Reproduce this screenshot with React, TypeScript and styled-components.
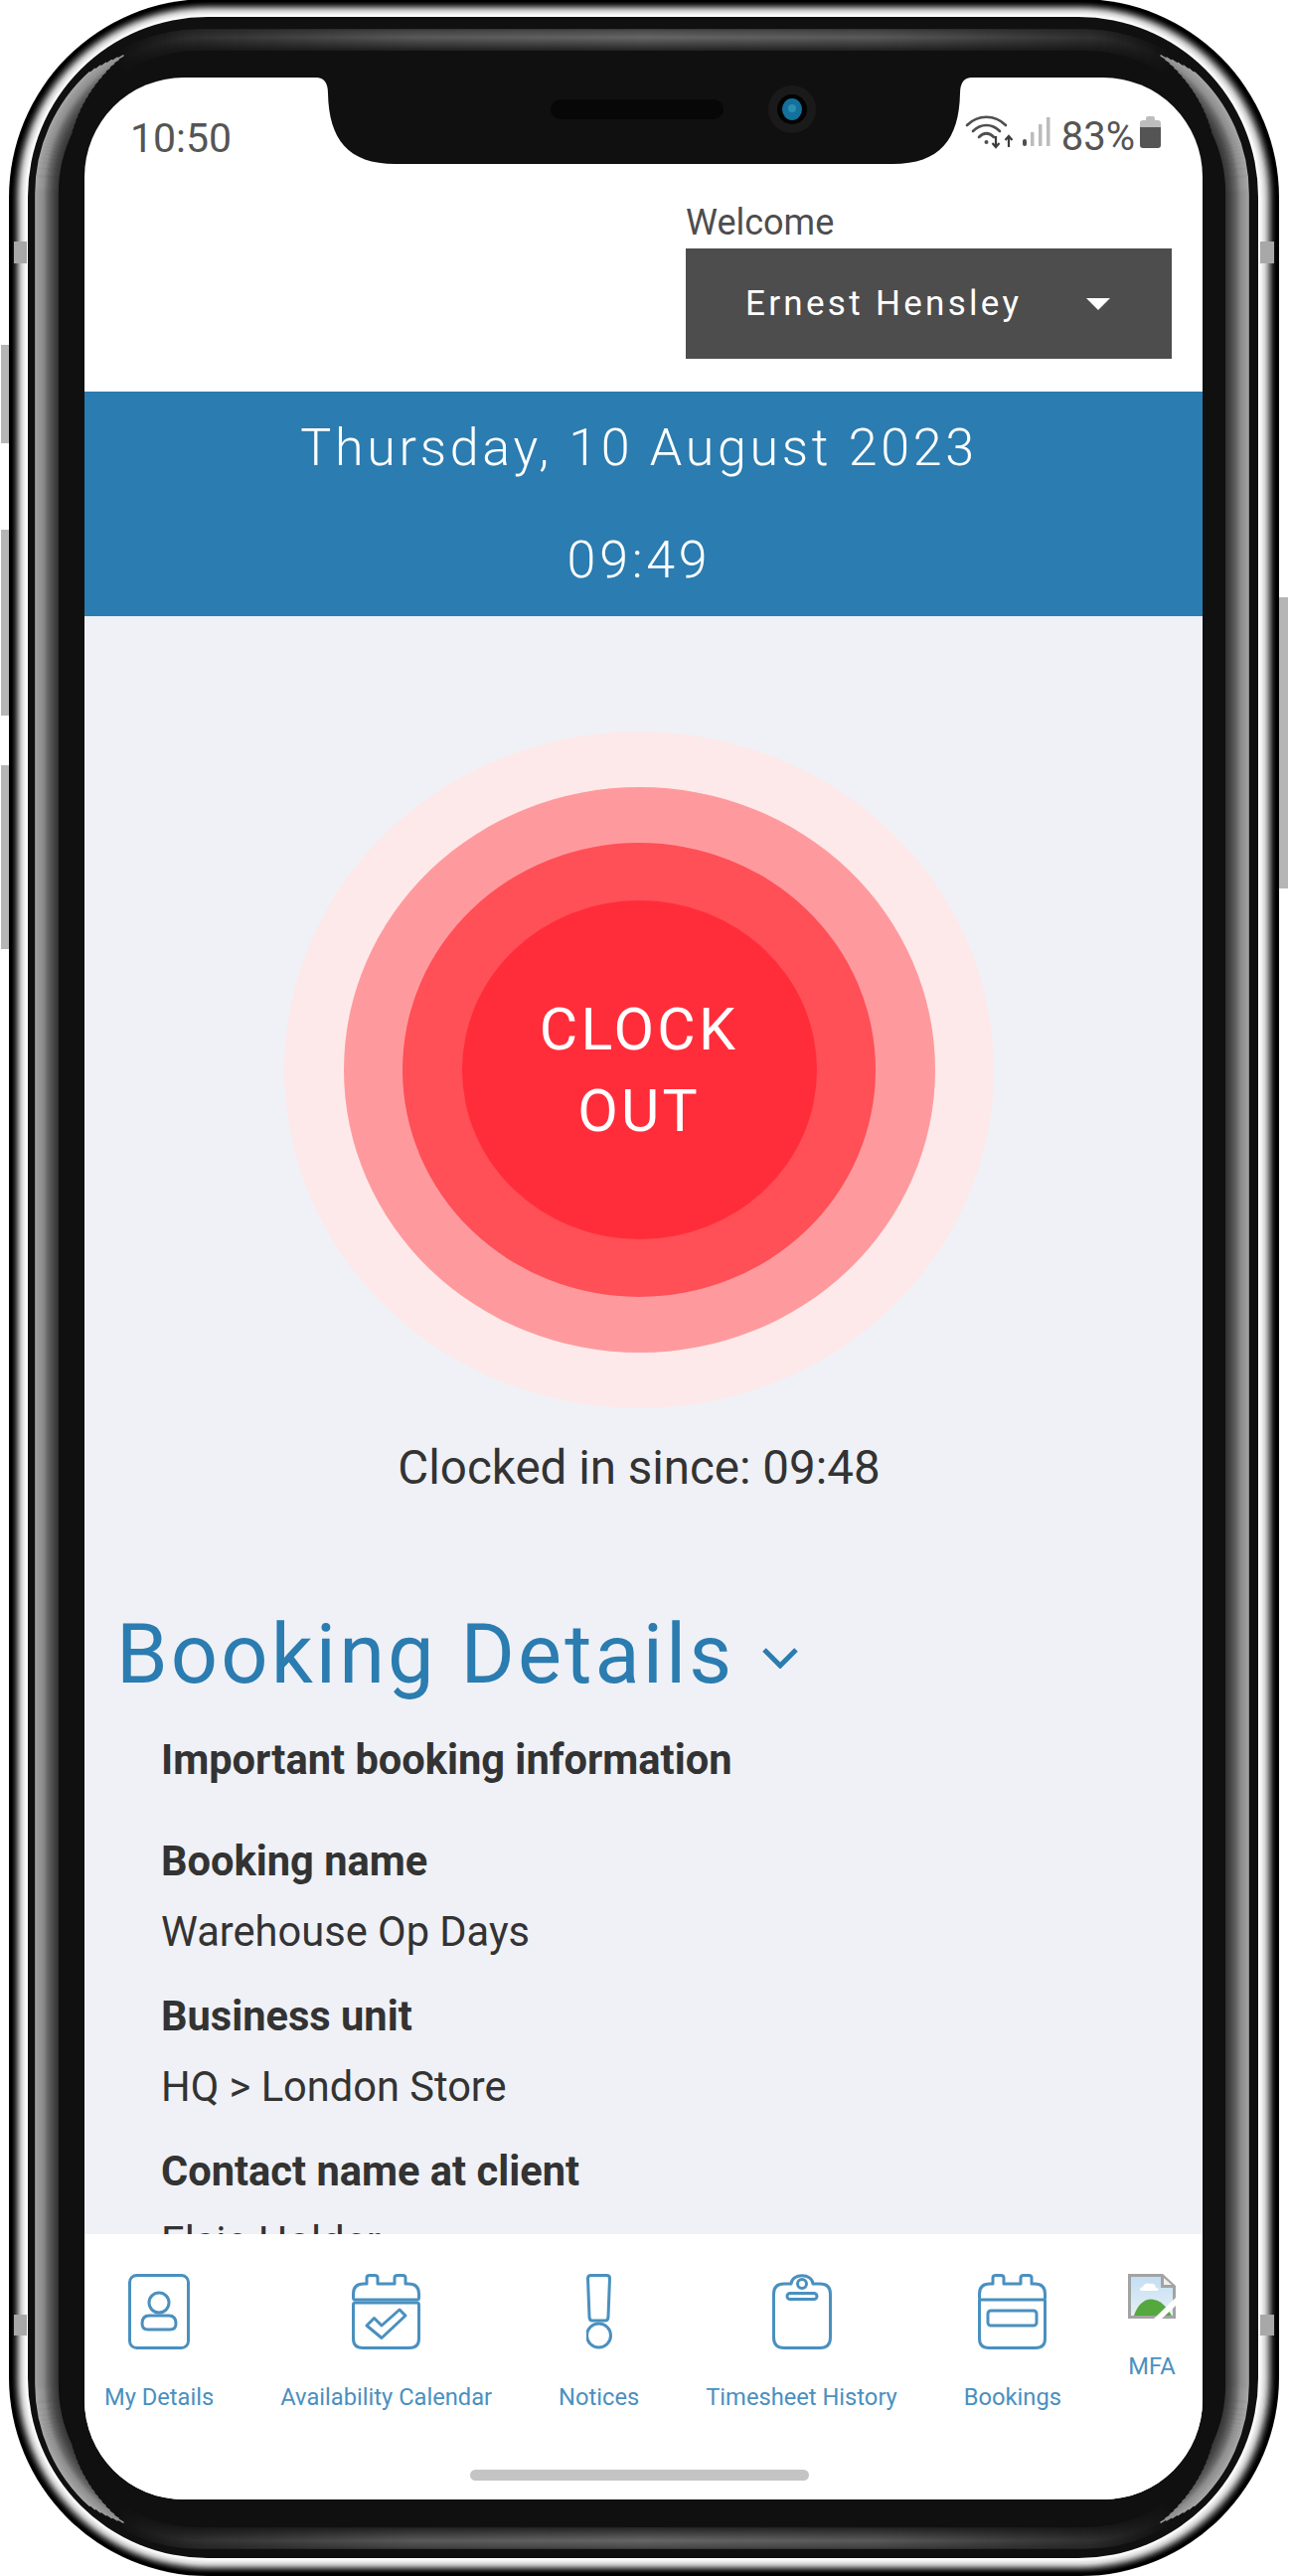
import React from "react";
import styled, { createGlobalStyle } from "styled-components";

const GlobalStyle = createGlobalStyle`
  html, body { margin: 0; padding: 0; background: #fff; }
  body { font-family: Roboto, "Liberation Sans", sans-serif; }
  * { box-sizing: border-box; }
`;

const BLUE = "#2b7cb0";
const NAV_BLUE = "#4a90bf";

const Phone = styled.div`
  position: relative;
  width: 1298px;
  height: 2592px;
  padding: 78px 88px 77px 85px;
  overflow: hidden;
`;

const FrameArt = styled.svg<{ $front?: boolean }>`
  position: absolute;
  left: 0;
  top: 0;
  z-index: ${(p) => (p.$front ? 2 : 0)};
`;

const Screen = styled.div`
  position: relative;
  z-index: 1;
  height: 100%;
  display: flex;
  flex-direction: column;
  background: #fff;
  border-radius: 100px;
  overflow: hidden;
`;

const StatusBar = styled.div`
  display: flex;
  justify-content: space-between;
  align-items: flex-start;
  padding: 38px 41px 0 46px;
  color: #555;
  font-size: 40px;
  line-height: 46px;
`;

const ClockTime = styled.span`
  font-size: 41px;
`;

const StatusRight = styled.div`
  display: flex;
  align-items: flex-start;
  margin-top: -1px;
`;

const WelcomeBlock = styled.div`
  align-self: flex-end;
  width: 489px;
  margin: 41px 31px 33px 0;
`;

const WelcomeLabel = styled.div`
  color: #4d4d4d;
  font-size: 36px;
  line-height: 42px;
  margin-bottom: 5px;
`;

const UserSelect = styled.div`
  display: flex;
  align-items: center;
  height: 111px;
  padding-left: 60px;
  background: #4d4d4d;
  color: #fff;
  font-size: 35px;
  letter-spacing: 3.3px;
`;

const Caret = styled.span`
  width: 0;
  height: 0;
  margin-left: 65px;
  border-left: 12px solid transparent;
  border-right: 12px solid transparent;
  border-top: 12px solid #fff;
`;

const DateBand = styled.div`
  background: ${BLUE};
  color: #fff;
  text-align: center;
  padding-right: 9px;
  font-weight: 300;
  font-size: 52px;
  line-height: 113px;
  letter-spacing: 3.7px;
`;

const Main = styled.main`
  flex: 1;
  min-height: 0;
  overflow: hidden;
  background: #eff1f6;
  padding: 116px 9px 0 0;
`;

const Ring = styled.div<{ $w: number; $h: number; $bg: string }>`
  width: ${(p) => p.$w}px;
  height: ${(p) => p.$h}px;
  margin: 0 auto;
  display: flex;
  align-items: center;
  justify-content: center;
  border-radius: 50%;
  background: ${(p) => p.$bg};
`;

const ClockLabel = styled.div`
  color: #fff;
  text-align: center;
  font-size: 59px;
  line-height: 82px;
  letter-spacing: 3.2px;
`;

const ClockedSince = styled.div`
  margin-top: 32px;
  color: #333;
  text-align: center;
  font-size: 47.5px;
  line-height: 56px;
`;

const SectionTitle = styled.h2`
  display: flex;
  align-items: center;
  gap: 28px;
  margin: 110px 0 0 32px;
  color: ${BLUE};
  font-weight: 400;
  font-size: 83px;
  line-height: 100px;
  letter-spacing: 3.1px;
`;

const Details = styled.div`
  padding: 33px 0 0 77px;
  color: #333;
  font-size: 41.6px;
  line-height: 46px;
`;

const Intro = styled.div`
  font-weight: 700;
  margin-bottom: 56px;
`;

const Field = styled.div`
  margin-bottom: 39px;
`;

const FieldLabel = styled.div`
  font-weight: 700;
  margin-bottom: 25px;
`;

const Nav = styled.nav`
  height: 267px;
  flex: none;
  background: #fff;
  display: flex;
  flex-direction: column;
  align-items: center;
  padding-right: 9px;
`;

const Tabs = styled.div`
  align-self: stretch;
  display: flex;
  align-items: flex-start;
  gap: 67px;
  padding: 40px 0 0 20px;
  height: 178px;
  white-space: nowrap;
`;

const Tab = styled.div`
  display: flex;
  flex-direction: column;
  align-items: center;
  gap: 35px;
  color: ${NAV_BLUE};
  font-size: 23.7px;
  line-height: 26px;
`;

const HomeBar = styled.div`
  width: 341px;
  height: 11px;
  margin-top: 59px;
  border-radius: 6px;
  background: #c4c4c4;
`;

const Line = styled.svg.attrs({ fill: "none", stroke: NAV_BLUE, strokeWidth: 3 })`
  display: block;
  stroke-linejoin: round;
`;

const lerp = (a: number, b: number, t: number) => a + (b - a) * t;

const silver = ["#000", "#000", "#000", "#0c0c0c", "#1a1a1a", "#2c2c2c", "#444", "#5e5e5e", "#7a7a7a", "#969696", "#b0b0b0", "#c6c6c6", "#d6d6d6", "#e2e2e2", "#ececec", "#f4f4f4", "#fbfbfb", "#fff"];

// grey of the inner bezel band, outermost radius first
const sideGrey = (i: number) => {
  const stops: [number, number][] = [[0, 168], [8, 144], [13, 102], [18, 74], [22, 58]];
  for (let s = 0; s < stops.length - 1; s++) {
    const [a, ca] = stops[s];
    const [b, cb] = stops[s + 1];
    if (i <= b) {
      const v = Math.round(lerp(ca, cb, (i - a) / (b - a)));
      return `rgb(${v},${v},${v})`;
    }
  }
  return "rgb(58,58,58)";
};

const flatGrey = (i: number) => {
  const v = Math.round(i < 8 ? lerp(74, 108, i / 8) : lerp(108, 44, (i - 8) / 12));
  return `rgb(${v},${v},${v})`;
};

const rad = (d: number) => (d * Math.PI) / 180;
const CX1 = 201;
const CX2 = 1091;
const CY1 = 195;
const CY2 = 2399;

const leftBand = (r: number, t: number) =>
  `M${CX1 - r * Math.sin(t)} ${CY1 - r * Math.cos(t)} A${r} ${r} 0 0 0 ${CX1 - r} ${CY1} L${CX1 - r} ${CY2} A${r} ${r} 0 0 0 ${CX1 - r * Math.sin(t)} ${CY2 + r * Math.cos(t)}`;
const rightBand = (r: number, t: number) =>
  `M${CX2 + r * Math.sin(t)} ${CY1 - r * Math.cos(t)} A${r} ${r} 0 0 1 ${CX2 + r} ${CY1} L${CX2 + r} ${CY2} A${r} ${r} 0 0 1 ${CX2 + r * Math.sin(t)} ${CY2 + r * Math.cos(t)}`;
const topBand = (r: number, t: number) =>
  `M${CX1 - r * Math.sin(t)} ${CY1 - r * Math.cos(t)} A${r} ${r} 0 0 1 ${CX1} ${CY1 - r} L${CX2} ${CY1 - r} A${r} ${r} 0 0 1 ${CX2 + r * Math.sin(t)} ${CY1 - r * Math.cos(t)}`;
const bottomBand = (r: number, t: number) =>
  `M${CX1 - r * Math.sin(t)} ${CY2 + r * Math.cos(t)} A${r} ${r} 0 0 0 ${CX1} ${CY2 + r} L${CX2} ${CY2 + r} A${r} ${r} 0 0 0 ${CX2 + r * Math.sin(t)} ${CY2 + r * Math.cos(t)}`;

const range = (n: number) => Array.from({ length: n }, (_, i) => i);

const PhoneBody = () => (
  <FrameArt width={1298} height={2592} viewBox="0 0 1298 2592">
    <defs>
      <linearGradient id="bandFade" x1="0" x2="1298" y1="0" y2="0" gradientUnits="userSpaceOnUse">
        <stop offset="0.09" stopColor="#fff" stopOpacity="0" />
        <stop offset="0.16" stopColor="#fff" stopOpacity="0.4" />
        <stop offset="0.32" stopColor="#fff" stopOpacity="0.85" />
        <stop offset="0.5" stopColor="#fff" stopOpacity="1" />
        <stop offset="0.68" stopColor="#fff" stopOpacity="0.85" />
        <stop offset="0.84" stopColor="#fff" stopOpacity="0.4" />
        <stop offset="0.91" stopColor="#fff" stopOpacity="0" />
      </linearGradient>
      <mask id="bandMask" maskUnits="userSpaceOnUse" x="0" y="0" width="1298" height="2592">
        <rect width="1298" height="2592" fill="url(#bandFade)" />
      </mask>
    </defs>
    <g fill="#b5b5b5">
      <rect x="1" y="347" width="10" height="99" />
      <rect x="1" y="533" width="10" height="187" />
      <rect x="1" y="770" width="10" height="185" />
      <rect x="1285" y="601" width="11" height="293" />
    </g>
    {silver.map((c, i) => {
      const t = i / 18;
      const x0 = lerp(9, 28, t);
      const x1 = lerp(1287, 1266, t);
      const y0 = lerp(-1, 17, t);
      const y1 = lerp(2592, 2574, t);
      return <rect key={i} x={x0} y={y0} width={x1 - x0} height={y1 - y0} rx={200 - i} fill={c} />;
    })}
    <rect x="14" y="243" width="13" height="22" fill="#a8a8a8" />
    <rect x="1268" y="243" width="14" height="22" fill="#a8a8a8" />
    <rect x="14" y="2329" width="13" height="21" fill="#a8a8a8" />
    <rect x="1268" y="2329" width="14" height="21" fill="#a8a8a8" />
    <rect x="28" y="17" width="1238" height="2557" rx="181" fill="#101010" />
    <g fill="none" strokeWidth="1.6" mask="url(#bandMask)">
      {range(21).map((i) => (
        <path key={i} d={topBand(165 - i, rad(45))} stroke={flatGrey(i)} />
      ))}
      {range(21).map((i) => (
        <path key={i} d={bottomBand(165 - i, rad(45))} stroke={flatGrey(i)} />
      ))}
    </g>
    <g fill="none" strokeWidth="1.6" strokeLinecap="round">
      {range(23).map((i) => {
        const t = rad(29 + Math.abs(i - 6) * 2.2);
        return (
          <g key={i} stroke={sideGrey(i)}>
            <path d={leftBand(165 - i, t)} />
            <path d={rightBand(165 - i, t)} />
          </g>
        );
      })}
    </g>
  </FrameArt>
);

const Notch = () => (
  <FrameArt $front width={1298} height={2592} viewBox="0 0 1298 2592" style={{ pointerEvents: "none" }}>
    <path d="M318 78 Q330 78 330 94 C331 140 350 165 398 165 L898 165 C946 165 965 140 966 94 Q966 78 978 78 Z" fill="#101010" />
    <rect x="554" y="100" width="174" height="20" rx="10" fill="#070707" />
    <circle cx="797" cy="110" r="24" fill="#1a1a1a" />
    <ellipse cx="797" cy="110" rx="15" ry="15" fill="#030303" />
    <ellipse cx="797" cy="110" rx="10" ry="11" fill="#14709c" />
    <circle cx="797" cy="109" r="4" fill="#2b8fb0" />
  </FrameArt>
);

const WifiIcon = () => (
  <svg width="49" height="36" viewBox="0 0 49 36" fill="none">
    <g stroke="#4f4f4f" strokeWidth="2.6" strokeLinecap="round">
      <path d="M2 11 C13 0 30 0 41 11" />
      <path d="M8 17 C16 9 27 9 35 17" />
      <path d="M14 23 C19 18 24 18 29 23" />
    </g>
    <circle cx="21.5" cy="28" r="2" fill="#4f4f4f" />
    <g stroke="#3c3c3c" strokeWidth="2.2" fill="none">
      <path d="M31 22 V33 M27.5 29 L31 33 L34.5 29" />
      <path d="M44 33 V22 M40.5 26 L44 22 L47.5 26" />
    </g>
  </svg>
);

const SignalIcon = () => (
  <svg width="30" height="36" viewBox="0 0 30 36" style={{ margin: "0 10px 0 8px" }}>
    <rect x="1" y="25" width="4" height="7" rx="2" fill="#4f4f4f" />
    <rect x="9" y="18" width="3.5" height="14" fill="#bcbcbc" />
    <rect x="17" y="10" width="3.5" height="22" fill="#bcbcbc" />
    <rect x="25" y="3" width="3.5" height="29" fill="#bcbcbc" />
  </svg>
);

const BatteryIcon = () => (
  <svg width="23" height="36" viewBox="0 0 23 36" style={{ marginLeft: 4 }}>
    <path d="M7 4 Q7 2 9 2 H14 Q16 2 16 4 V6 H19 Q22 6 22 9 V14 H1 V9 Q1 6 4 6 H7 Z" fill="#bdbdbd" />
    <path d="M1 13 H22 V31 Q22 34 19 34 H4 Q1 34 1 31 Z" fill="#545454" />
  </svg>
);

const DetailsIcon = () => (
  <Line width="62" height="76" viewBox="0 0 62 76">
    <rect x="1.5" y="1.5" width="59" height="73" rx="7" />
    <circle cx="31" cy="29" r="10" />
    <path d="M21 42 H41 Q48 42 48 50 Q48 56 42 56 H20 Q14 56 14 50 Q14 42 21 42 Z" />
  </Line>
);

const CalendarTop = () => (
  <path d="M15 10 V4 Q15 1.5 18 1.5 H23 Q26 1.5 26 4 V10 H43 V4 Q43 1.5 46 1.5 H51 Q54 1.5 54 4 V10 H57 Q67.5 10 67.5 20 V24 Q67.5 26 65.5 26 H3.5 Q1.5 26 1.5 24 V20 Q1.5 10 12 10 Z" />
);

const AvailabilityIcon = () => (
  <Line width="69" height="76" viewBox="0 0 69 76">
    <CalendarTop />
    <path d="M3.5 29 H65.5 Q67.5 29 67.5 31 V65 Q67.5 74.5 58 74.5 H11 Q1.5 74.5 1.5 65 V31 Q1.5 29 3.5 29 Z" />
    <path d="M15 52 L22.5 44.5 L30 52 L48 36 L54 42 L30 64.5 Z" />
  </Line>
);

const NoticesIcon = () => (
  <Line width="26" height="76" viewBox="0 0 26 76">
    <path d="M4.5 1.5 H20.5 Q23.5 1.5 23.5 4.5 L22 43 Q22 47 19 47 H6 Q3 47 3 43 L1.5 4.5 Q1.5 1.5 4.5 1.5 Z" />
    <circle cx="12.5" cy="62" r="12" />
  </Line>
);

const TimesheetIcon = () => (
  <Line width="60" height="76" viewBox="0 0 60 76">
    <path d="M19 10 C20 -1 40 -1 41 10 H48 Q58.5 10 58.5 20 V64 Q58.5 74.5 48 74.5 H12 Q1.5 74.5 1.5 64 V20 Q1.5 10 12 10 Z" />
    <circle cx="30" cy="10" r="4.5" />
    <rect x="15" y="19.5" width="30" height="6" rx="3" />
  </Line>
);

const BookingsIcon = () => (
  <Line width="69" height="76" viewBox="0 0 69 76">
    <CalendarTop />
    <path d="M1.5 26 V65 Q1.5 74.5 11 74.5 H58 Q67.5 74.5 67.5 65 V26" />
    <rect x="10" y="37" width="49" height="15" rx="3" />
  </Line>
);

// the browser's broken image glyph
const BrokenImage = () => (
  <svg width="48" height="45" viewBox="0 0 48 45" style={{ display: "block" }}>
    <defs>
      <linearGradient id="sky" x1="0" x2="0" y1="0" y2="1">
        <stop offset="0" stopColor="#c4def2" />
        <stop offset="1" stopColor="#e6f0f6" />
      </linearGradient>
    </defs>
    <path d="M0 0 H35 L48 12 V45 H0 Z" fill="#a3a3a3" />
    <path d="M3 3 H33 V14 H45 V42 H3 Z" fill="url(#sky)" />
    <path d="M36 4 L44 11 H36 Z" fill="#efefef" />
    <path d="M15 13 Q17 8 22 10 Q27 9 28 14 Q32 15 30 17 H13 Q10 15 15 13 Z" fill="#fff" />
    <path d="M6 42 C10 30 18 24 26 26 C33 27 38 32 44 42 Z" fill="#55a83e" />
    <path d="M48 24 L26 45 H34 L48 32 Z" fill="#fff" />
  </svg>
);

const Chevron = () => (
  <svg width="36" height="21" viewBox="0 0 36 21" fill="none" stroke={BLUE} strokeWidth="5" style={{ marginTop: 6 }}>
    <path d="M2 2 L18 18 L34 2" />
  </svg>
);

const fields = [
  ["Booking name", "Warehouse Op Days"],
  ["Business unit", "HQ > London Store"],
  ["Contact name at client", "Elsie Holder"],
];

const tabs = [
  ["My Details", <DetailsIcon key="d" />],
  ["Availability Calendar", <AvailabilityIcon key="a" />],
  ["Notices", <NoticesIcon key="n" />],
  ["Timesheet History", <TimesheetIcon key="t" />],
  ["Bookings", <BookingsIcon key="b" />],
  ["MFA", <BrokenImage key="m" />],
] as const;

export default function App() {
  return (
    <>
      <GlobalStyle />
      <Phone>
        <PhoneBody />
        <Screen>
          <StatusBar>
            <ClockTime>10:50</ClockTime>
            <StatusRight>
              <WifiIcon />
              <SignalIcon />
              <span>83%</span>
              <BatteryIcon />
            </StatusRight>
          </StatusBar>
          <WelcomeBlock>
            <WelcomeLabel>Welcome</WelcomeLabel>
            <UserSelect>
              Ernest Hensley
              <Caret />
            </UserSelect>
          </WelcomeBlock>
          <DateBand>
            <div>Thursday, 10 August 2023</div>
            <div>09:49</div>
          </DateBand>
          <Main>
            <Ring $w={714} $h={681} $bg="#fde9e9">
              <Ring $w={595} $h={569} $bg="#fe9a9e">
                <Ring $w={476} $h={457} $bg="#ff4f57">
                  <Ring $w={357} $h={341} $bg="#ff2d3a">
                    <ClockLabel>
                      CLOCK
                      <br />
                      OUT
                    </ClockLabel>
                  </Ring>
                </Ring>
              </Ring>
            </Ring>
            <ClockedSince>Clocked in since: 09:48</ClockedSince>
            <SectionTitle>
              Booking Details
              <Chevron />
            </SectionTitle>
            <Details>
              <Intro>Important booking information</Intro>
              {fields.map(([label, value]) => (
                <Field key={label}>
                  <FieldLabel>{label}</FieldLabel>
                  <div>{value}</div>
                </Field>
              ))}
            </Details>
          </Main>
          <Nav>
            <Tabs>
              {tabs.map(([label, icon]) => (
                <Tab key={label}>
                  {icon}
                  <span>{label}</span>
                </Tab>
              ))}
            </Tabs>
            <HomeBar />
          </Nav>
        </Screen>
        <Notch />
      </Phone>
    </>
  );
}
